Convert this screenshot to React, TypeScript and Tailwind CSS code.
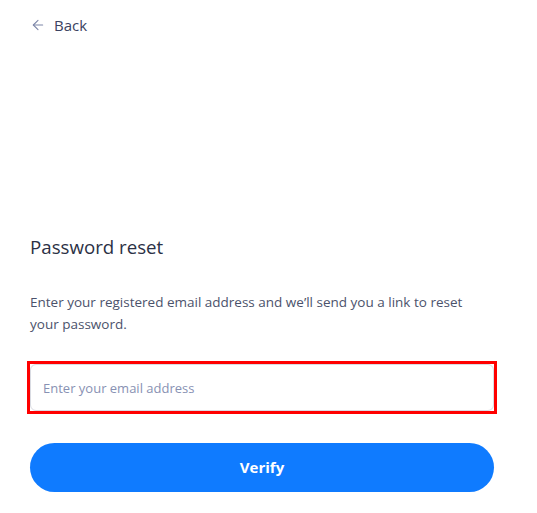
import { ArrowLeft } from "lucide-react";

export default function App() {
  return (
    <div className="min-h-screen bg-white font-['Open_Sans',sans-serif]">
      <div className="w-[464px] ml-[30px] flex flex-col">
        <button type="button" className="flex items-center gap-[8px] mt-[15px] h-[20px] text-[15px] text-[#3b4261] self-start">
          <ArrowLeft className="w-[16px] h-[16px] text-[#7d86a8]" strokeWidth={1.6} />
          Back
        </button>

        <h1 className="mt-[199px] text-[18.7px] leading-[26px] text-[#2b3145]">Password reset</h1>

        <p className="mt-[31px] text-[13.5px] leading-[22px] text-[#4b526b] pr-[8px]">
          Enter your registered email address and we’ll send you a link to reset your password.
        </p>

        <div className="mt-[29px] outline-[3px] outline-[#ff0000]">
          <input
            type="email"
            placeholder="Enter your email address"
            className="w-full h-[47px] px-[12px] rounded-[6px] border border-[#d9dbe2] text-[13px] text-[#2b3145] placeholder:text-[#8891b3] outline-none"
          />
        </div>

        <button
          type="button"
          className="mt-[32px] h-[49px] rounded-full bg-[#0f7bff] text-white text-[15px] font-bold"
        >
          Verify
        </button>
      </div>
    </div>
  );
}
